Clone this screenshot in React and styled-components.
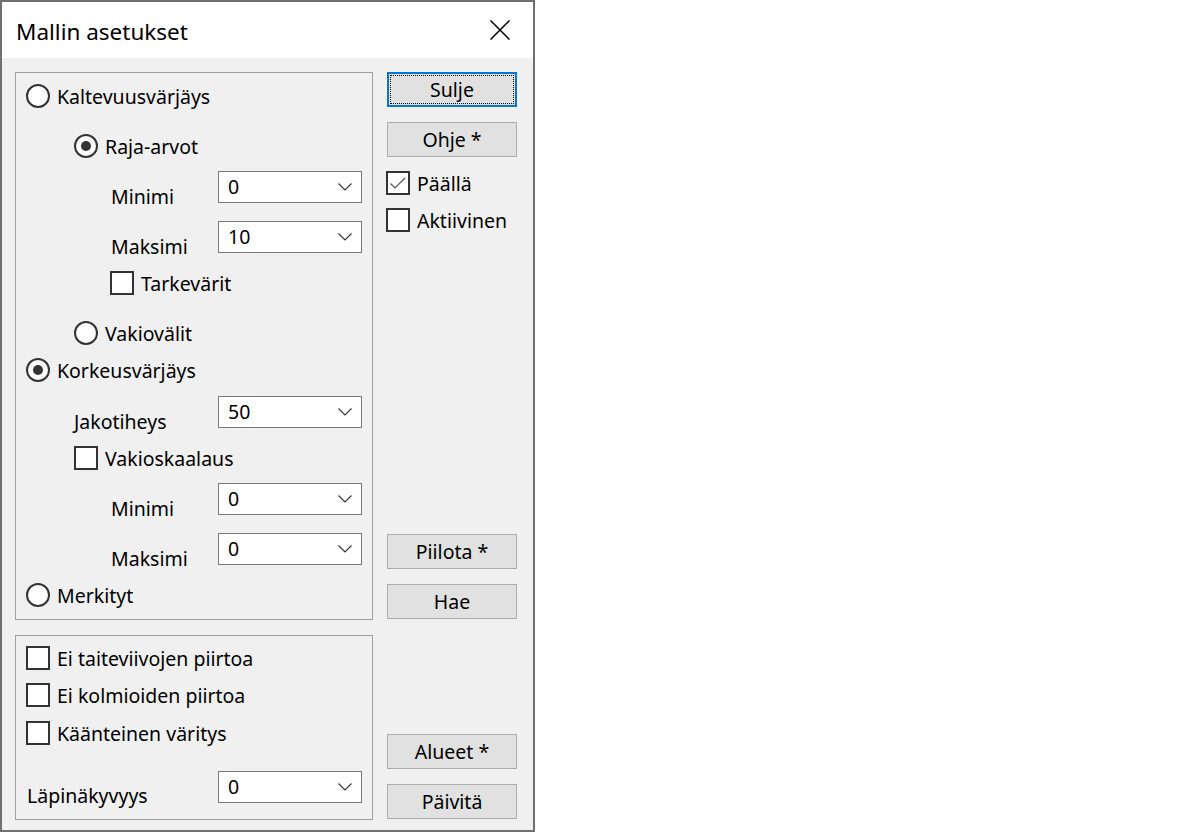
import React from "react";
import styled, { createGlobalStyle, css } from "styled-components";

const Global = createGlobalStyle`
  html, body { margin: 0; padding: 0; background: #ffffff; }
  body { font-family: "Noto Sans", "Open Sans", sans-serif; color: #000; }
  * { box-sizing: border-box; }
`;

const FONT = "19.5px";

const Window = styled.div`
  width: 535px;
  height: 832px;
  border: 2px solid #707070;
  background: #f0f0f0;
  display: flex;
  flex-direction: column;
`;

const TitleBar = styled.div`
  height: 56px;
  background: #ffffff;
  display: flex;
  align-items: center;
  justify-content: space-between;
  padding-left: 14px;
  flex-shrink: 0;
`;

const Title = styled.div`
  font-size: 22.5px;
  line-height: 28px;
  margin-top: 3px;
`;

const CloseButton = styled.div`
  width: 66px;
  height: 56px;
  display: flex;
  align-items: center;
  justify-content: center;
`;

const Body = styled.div`
  flex: 1;
  display: flex;
  gap: 14px;
  padding: 14px 16px 0 13px;
`;

const LeftCol = styled.div`
  width: 358px;
  display: flex;
  flex-direction: column;
`;

const Group = styled.div`
  height: ${(p) => p.$h}px;
  margin-top: ${(p) => p.$mt || 0}px;
  border: 1px solid #a0a0a0;
  display: flex;
  flex-direction: column;
`;

const Row = styled.div`
  display: flex;
  align-items: center;
  gap: 7px;
  height: 24px;
  margin-top: ${(p) => p.$mt}px;
  padding-left: ${(p) => p.$indent}px;
`;

const Text = styled.span`
  font-size: ${FONT};
  line-height: 24px;
  margin-top: 2px;
  white-space: nowrap;
`;

const FieldRow = styled.div`
  display: flex;
  align-items: flex-start;
  height: 32px;
  margin-top: ${(p) => p.$mt}px;
  padding-left: ${(p) => p.$indent}px;
`;

const FieldLabel = styled.span`
  font-size: ${FONT};
  line-height: 24px;
  margin-top: ${(p) => p.$off ?? 14}px;
  white-space: nowrap;
`;

const Combo = styled.div`
  margin-left: auto;
  margin-right: 10px;
  width: 144px;
  height: 32px;
  background: #ffffff;
  border: 1px solid #7a7a7a;
  display: flex;
  align-items: center;
  justify-content: space-between;
  padding: 0 9px 0 9px;
`;

const ComboValue = styled.span`
  font-size: ${FONT};
  line-height: 30px;
  margin-top: -1px;
`;

const Radio = styled.span`
  width: 24px;
  height: 24px;
  border-radius: 50%;
  border: 2px solid #333333;
  background: #ffffff;
  flex-shrink: 0;
  display: flex;
  align-items: center;
  justify-content: center;
  ${(p) =>
    p.$checked &&
    css`
      &::after {
        content: "";
        width: 10px;
        height: 10px;
        border-radius: 50%;
        background: #333333;
      }
    `}
`;

const Box = styled.span`
  width: 24px;
  height: 24px;
  border: 2px solid #333333;
  background: #ffffff;
  flex-shrink: 0;
  display: flex;
  align-items: center;
  justify-content: center;
`;

const RightCol = styled.div`
  width: 130px;
  display: flex;
  flex-direction: column;
`;

const Button = styled.button`
  height: 35px;
  width: 130px;
  margin-top: ${(p) => p.$mt || 0}px;
  background: #e1e1e1;
  border: 1px solid #adadad;
  font-family: "Noto Sans", "Open Sans", sans-serif;
  font-size: ${FONT};
  line-height: 24px;
  color: #000;
  padding: 1px 0 0 0;
  position: relative;
  ${(p) =>
    p.$focused &&
    css`
      border: 2px solid #0078d7;
      &::after {
        content: "";
        position: absolute;
        inset: 1px;
        border: 1px dotted #000;
      }
    `}
`;

const SideCheck = styled.div`
  display: flex;
  align-items: center;
  gap: 7px;
  height: 24px;
  margin-top: ${(p) => p.$mt}px;
  margin-left: -1px;
`;

const Check = () => (
  <svg width="20" height="20" viewBox="0 0 20 20">
    <path d="M2.5 10.5 L7 15 L17 5" fill="none" stroke="#555" strokeWidth="1.2" />
  </svg>
);

const CheckBox = ({ checked }) => <Box>{checked && <Check />}</Box>;

const Chevron = () => (
  <svg width="14" height="8" viewBox="0 0 14 8">
    <path d="M0.5 0.5 L7 7 L13.5 0.5" fill="none" stroke="#333" strokeWidth="1.1" />
  </svg>
);

const Field = ({ label, value, mt, indent, off }) => (
  <FieldRow $mt={mt} $indent={indent}>
    <FieldLabel $off={off}>{label}</FieldLabel>
    <Combo>
      <ComboValue>{value}</ComboValue>
      <Chevron />
    </Combo>
  </FieldRow>
);

const RadioRow = ({ label, checked, mt, indent }) => (
  <Row $mt={mt} $indent={indent}>
    <Radio $checked={checked} />
    <Text>{label}</Text>
  </Row>
);

const CheckRow = ({ label, checked, mt, indent }) => (
  <Row $mt={mt} $indent={indent}>
    <CheckBox checked={checked} />
    <Text>{label}</Text>
  </Row>
);

export default function App() {
  return (
    <>
      <Global />
      <Window>
        <TitleBar>
          <Title>Mallin asetukset</Title>
          <CloseButton>
            <svg width="20" height="20" viewBox="0 0 20 20">
              <path d="M0.5 0.5 L19.5 19.5 M19.5 0.5 L0.5 19.5" stroke="#000" strokeWidth="1.5" />
            </svg>
          </CloseButton>
        </TitleBar>
        <Body>
          <LeftCol>
            <Group $h={548}>
              <RadioRow label="Kaltevuusvärjäys" mt={11} indent={10} />
              <RadioRow label="Raja-arvot" checked mt={26} indent={58} />
              <Field label="Minimi" value="0" mt={13} indent={95} />
              <Field label="Maksimi" value="10" mt={18} indent={95} />
              <CheckRow label="Tarkevärit" mt={18} indent={94} />
              <RadioRow label="Vakiovälit" mt={26} indent={58} />
              <RadioRow label="Korkeusvärjäys" checked mt={13} indent={10} />
              <Field label="Jakotiheys" value="50" mt={14} indent={58} />
              <CheckRow label="Vakioskaalaus" mt={18} indent={58} />
              <Field label="Minimi" value="0" mt={13} indent={95} />
              <Field label="Maksimi" value="0" mt={18} indent={95} />
              <RadioRow label="Merkityt" mt={18} indent={10} />
            </Group>
            <Group $h={185} $mt={15}>
              <CheckRow label="Ei taiteviivojen piirtoa" mt={10} indent={10} />
              <CheckRow label="Ei kolmioiden piirtoa" mt={13} indent={10} />
              <CheckRow label="Käänteinen väritys" mt={14} indent={10} />
              <Field label="Läpinäkyvyys" value="0" mt={26} indent={11} off={13} />
            </Group>
          </LeftCol>
          <RightCol>
            <Button $focused>Sulje</Button>
            <Button $mt={15}>Ohje *</Button>
            <SideCheck $mt={14}>
              <CheckBox checked />
              <Text>Päällä</Text>
            </SideCheck>
            <SideCheck $mt={13}>
              <CheckBox />
              <Text>Aktiivinen</Text>
            </SideCheck>
            <Button $mt={302}>Piilota *</Button>
            <Button $mt={15}>Hae</Button>
            <Button $mt={115}>Alueet *</Button>
            <Button $mt={15}>Päivitä</Button>
          </RightCol>
        </Body>
      </Window>
    </>
  );
}
